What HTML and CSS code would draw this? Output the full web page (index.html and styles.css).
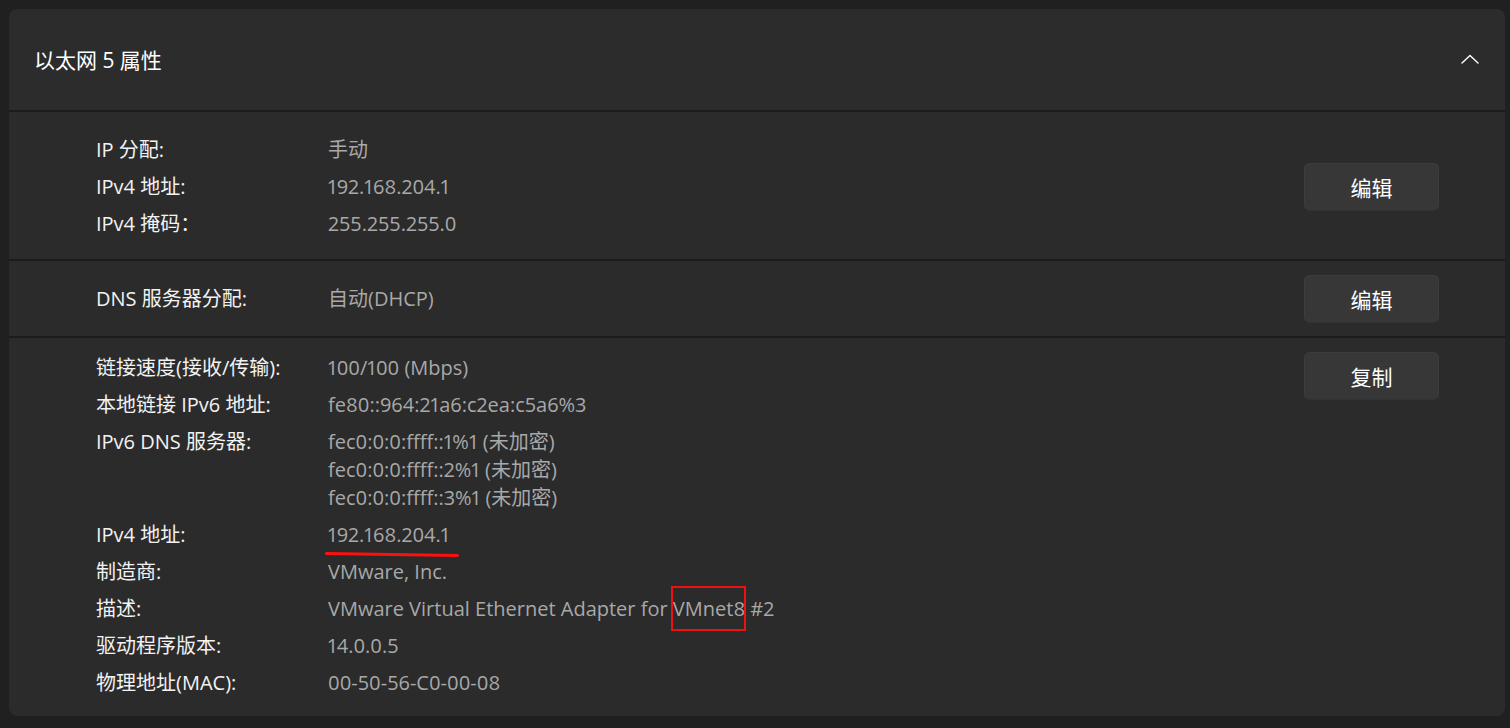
FILE: index.html
```html
<!DOCTYPE html>
<html lang="zh-CN">
<head>
<meta charset="utf-8">
<title>以太网 5 属性</title>
<link rel="stylesheet" href="styles.css">
</head>
<body>
<div class="card">
  <div class="header">
    <span class="title">以太网 5 属性</span>
    <svg class="chevron" width="18" height="10" viewBox="0 0 18 10"><path d="M1 9 L9 1.5 L17 9" fill="none" stroke="#ffffff" stroke-width="1.4" stroke-linecap="round" stroke-linejoin="round"/></svg>
  </div>

  <div class="section s1">
    <div class="rows">
      <div class="row"><div class="label">IP 分配:</div><div class="value">手动</div></div>
      <div class="row"><div class="label">IPv4 地址:</div><div class="value">192.168.204.1</div></div>
      <div class="row"><div class="label">IPv4 掩码：</div><div class="value">255.255.255.0</div></div>
    </div>
    <button class="btn">编辑</button>
  </div>

  <div class="section s2">
    <div class="rows">
      <div class="row"><div class="label">DNS 服务器分配:</div><div class="value">自动(DHCP)</div></div>
    </div>
    <button class="btn">编辑</button>
  </div>

  <div class="section s3">
    <div class="rows">
      <div class="row"><div class="label">链接速度(接收/传输):</div><div class="value">100/100 (Mbps)</div></div>
      <div class="row"><div class="label">本地链接 IPv6 地址:</div><div class="value">fe80::964:21a6:c2ea:c5a6%3</div></div>
      <div class="row"><div class="label">IPv6 DNS 服务器:</div><div class="value">fec0:0:0:ffff::1%1 (未加密)<br>fec0:0:0:ffff::2%1 (未加密)<br>fec0:0:0:ffff::3%1 (未加密)</div></div>
      <div class="row"><div class="label">IPv4 地址:</div><div class="value"><span class="underlined">192.168.204.1</span></div></div>
      <div class="row"><div class="label">制造商:</div><div class="value">VMware, Inc.</div></div>
      <div class="row"><div class="label">描述:</div><div class="value">VMware Virtual Ethernet Adapter for <span class="boxed">VMnet8</span> #2</div></div>
      <div class="row"><div class="label">驱动程序版本:</div><div class="value">14.0.0.5</div></div>
      <div class="row"><div class="label">物理地址(MAC):</div><div class="value">00-50-56-C0-00-08</div></div>
    </div>
    <button class="btn top">复制</button>
  </div>
</div>
</body>
</html>
```

FILE: styles.css
```css
* { box-sizing: border-box; }
html, body { margin: 0; height: 100%; }
body {
  background: #202020;
  padding: 9px 5px 0 9px;
  font-family: "Open Sans", "Noto Sans CJK SC", sans-serif;
  font-variant-numeric: proportional-nums;
  color: #ffffff;
  overflow: hidden;
}
.card {
  width: 1496px;
  height: 707px;
  border-radius: 8px;
  overflow: hidden;
  background: #1c1c1c;
  display: flex;
  flex-direction: column;
  gap: 2px;
}
.header {
  height: 101px;
  flex: none;
  background: #2c2c2c;
  display: flex;
  align-items: center;
  justify-content: space-between;
  padding: 0 26px 0 25px;
}
.title {
  font-size: 21px;
  line-height: 28px;
  color: #ffffff;
}
.chevron { display: block; margin-top: -2px; }
.section {
  background: #2b2b2b;
  display: flex;
  align-items: center;
  padding-left: 87px;
  padding-right: 66px;
  flex: none;
}
.s1 { height: 147px; padding-top: 3px; }
.s2 { height: 75px; }
.s3 { flex: 1; align-items: flex-start; padding-top: 14px; }
.s3 .rows { padding-top: 2px; }
.rows {
  flex: 1;
  display: flex;
  flex-direction: column;
  gap: 9px;
}
.row {
  display: flex;
  font-size: 20px;
  line-height: 28px;
}
.label {
  width: 232px;
  flex: none;
  color: #f2f2f2;
}
.value {
  color: #a8a8a8;
}
.btn {
  width: 135px;
  height: 48px;
  border-radius: 6px;
  background: #373737;
  border: 1px solid #3d3d3d;
  border-bottom-color: #333333;
  color: #ffffff;
  font-family: "Open Sans", "Noto Sans CJK SC", sans-serif;
  font-size: 21px;
  flex: none;
  padding: 0;
}
.underlined {
  position: relative;
  display: inline-block;
}
.underlined::after {
  content: "";
  position: absolute;
  left: -3px;
  width: 134px;
  top: 31px;
  height: 3px;
  background: #ff1010;
  border-radius: 2px;
  transform: rotate(0.9deg);
  transform-origin: left center;
}
.boxed {
  position: relative;
}
.boxed::after {
  content: "";
  position: absolute;
  left: -2px;
  right: -1px;
  top: -9px;
  bottom: -9px;
  border: 2px solid #f01010;
}
```
